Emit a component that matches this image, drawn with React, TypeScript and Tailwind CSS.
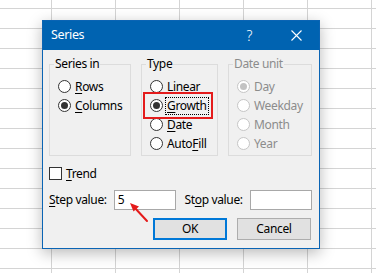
import React from 'react';

type RadioProps = {
  pre?: string;
  u: string;
  post: string;
  checked?: boolean;
  disabled?: boolean;
  focus?: boolean;
};

function Radio({ pre = '', u, post, checked, disabled, focus }: RadioProps) {
  return (
    <div className="flex h-[19px] items-center">
      <span
        className={`flex h-[13px] w-[13px] shrink-0 items-center justify-center rounded-full border bg-white ${
          disabled ? 'border-[#c6c6c6]' : 'border-[#333333]'
        }`}
      >
        {checked && (
          <span className={`h-[7px] w-[7px] rounded-full ${disabled ? 'bg-[#c3c3c3]' : 'bg-[#333333]'}`} />
        )}
      </span>
      <span
        className={`ml-[3px] px-[1px] leading-[16px] ${disabled ? 'text-[#8c8c8c]' : 'text-black'} ${
          focus ? 'outline-1 outline-dotted outline-black' : ''
        }`}
      >
        {pre}
        {disabled ? u : <span className="underline underline-offset-2">{u}</span>}
        {post}
      </span>
    </div>
  );
}

function Group({ title, disabled, width, children }: { title: string; disabled?: boolean; width: string; children: React.ReactNode }) {
  return (
    <fieldset className={`${width} border border-[#dcdcdc] pb-[2px]`}>
      <legend className={`ml-[4px] px-[1px] leading-[16px] ${disabled ? 'text-[#8c8c8c]' : 'text-black'}`}>{title}</legend>
      <div className="flex flex-col pl-[8px] pt-[5px]">{children}</div>
    </fieldset>
  );
}

export default function App() {
  return (
    <div
      className="relative h-[273px] w-[376px] overflow-hidden bg-white pl-[42px] pt-[20px] text-[12px] tracking-[-0.35px] [background-image:linear-gradient(to_right,#d4d4d4_1px,transparent_1px),linear-gradient(to_bottom,#d4d4d4_1px,transparent_1px)] [background-position:51px_8px] [background-size:64px_20px]"
      style={{ fontFamily: '"Noto Sans", "Open Sans", sans-serif' }}
    >
      <div className="flex h-[229px] w-[278px] flex-col border border-[#0a64b4] bg-[#f0f0f0] shadow-[0_4px_14px_rgba(0,0,0,0.28)]">
        {/* title bar */}
        <div className="flex h-[29px] items-center bg-[#0063b1] pl-[8px] text-white">
          <span className="text-[12.5px]">Series</span>
          <span className="ml-auto mr-[39px] text-[14px] font-light">?</span>
          <svg width="11" height="11" viewBox="0 0 11 11" className="mr-[17px]">
            <path d="M0.5 0.5 L10.5 10.5 M10.5 0.5 L0.5 10.5" stroke="white" strokeWidth="1.1" />
          </svg>
        </div>

        {/* body */}
        <div className="flex flex-col pl-[6px] pr-[7px] pt-[6px]">
          <div className="flex items-stretch gap-[10px]">
            <Group title="Series in" width="w-[82px]">
              <Radio u="R" post="ows" />
              <Radio u="C" post="olumns" checked />
            </Group>
            <Group title="Type" width="w-[77px]">
              <Radio u="L" post="inear" />
              <Radio u="G" post="rowth" checked focus />
              <Radio u="D" post="ate" />
              <Radio pre="Auto" u="F" post="ill" />
            </Group>
            <Group title="Date unit" width="w-[84px]" disabled>
              <Radio u="D" post="ay" checked disabled />
              <Radio u="W" post="eekday" disabled />
              <Radio u="M" post="onth" disabled />
              <Radio u="Y" post="ear" disabled />
            </Group>
          </div>

          <div className="mt-[11px] flex h-[13px] items-center">
            <span className="h-[13px] w-[13px] border border-[#333333] bg-white" />
            <span className="ml-[4px] leading-[16px]">
              <span className="underline underline-offset-2">T</span>rend
            </span>
          </div>

          <div className="mt-[10px] flex h-[20px] items-center">
            <span className="w-[65px] leading-[16px]">
              <span className="underline underline-offset-2">S</span>tep value:
            </span>
            <div className="flex h-[20px] w-[62px] items-center border border-[#a8a8a8] bg-white pl-[3px]">5</div>
            <span className="ml-[9px] w-[66px] leading-[16px]">
              St<span className="underline underline-offset-2">o</span>p value:
            </span>
            <div className="h-[20px] w-[62px] border border-[#a8a8a8] bg-white" />
          </div>

          <div className="mt-[8px] flex justify-end gap-[10px] pr-[1px]">
            <button className="flex h-[22px] w-[74px] items-center justify-center border-2 border-[#0078d7] bg-[#e1e1e1] text-black">
              OK
            </button>
            <button className="flex h-[22px] w-[74px] items-center justify-center border border-[#adadad] bg-[#e1e1e1] text-black">
              Cancel
            </button>
          </div>
        </div>
      </div>

      {/* annotations */}
      <div className="absolute left-[143px] top-[92px] h-[27px] w-[70px] border-2 border-[#e41b1b]" />
      <svg className="absolute left-[124px] top-[198px]" width="30" height="30" viewBox="0 0 30 30">
        <path d="M23 23 L10 9" stroke="#e41b1b" strokeWidth="2" strokeLinecap="round" />
        <path d="M6 5 L15 8.5 L9.5 13.5 Z" fill="#e41b1b" />
      </svg>
    </div>
  );
}
